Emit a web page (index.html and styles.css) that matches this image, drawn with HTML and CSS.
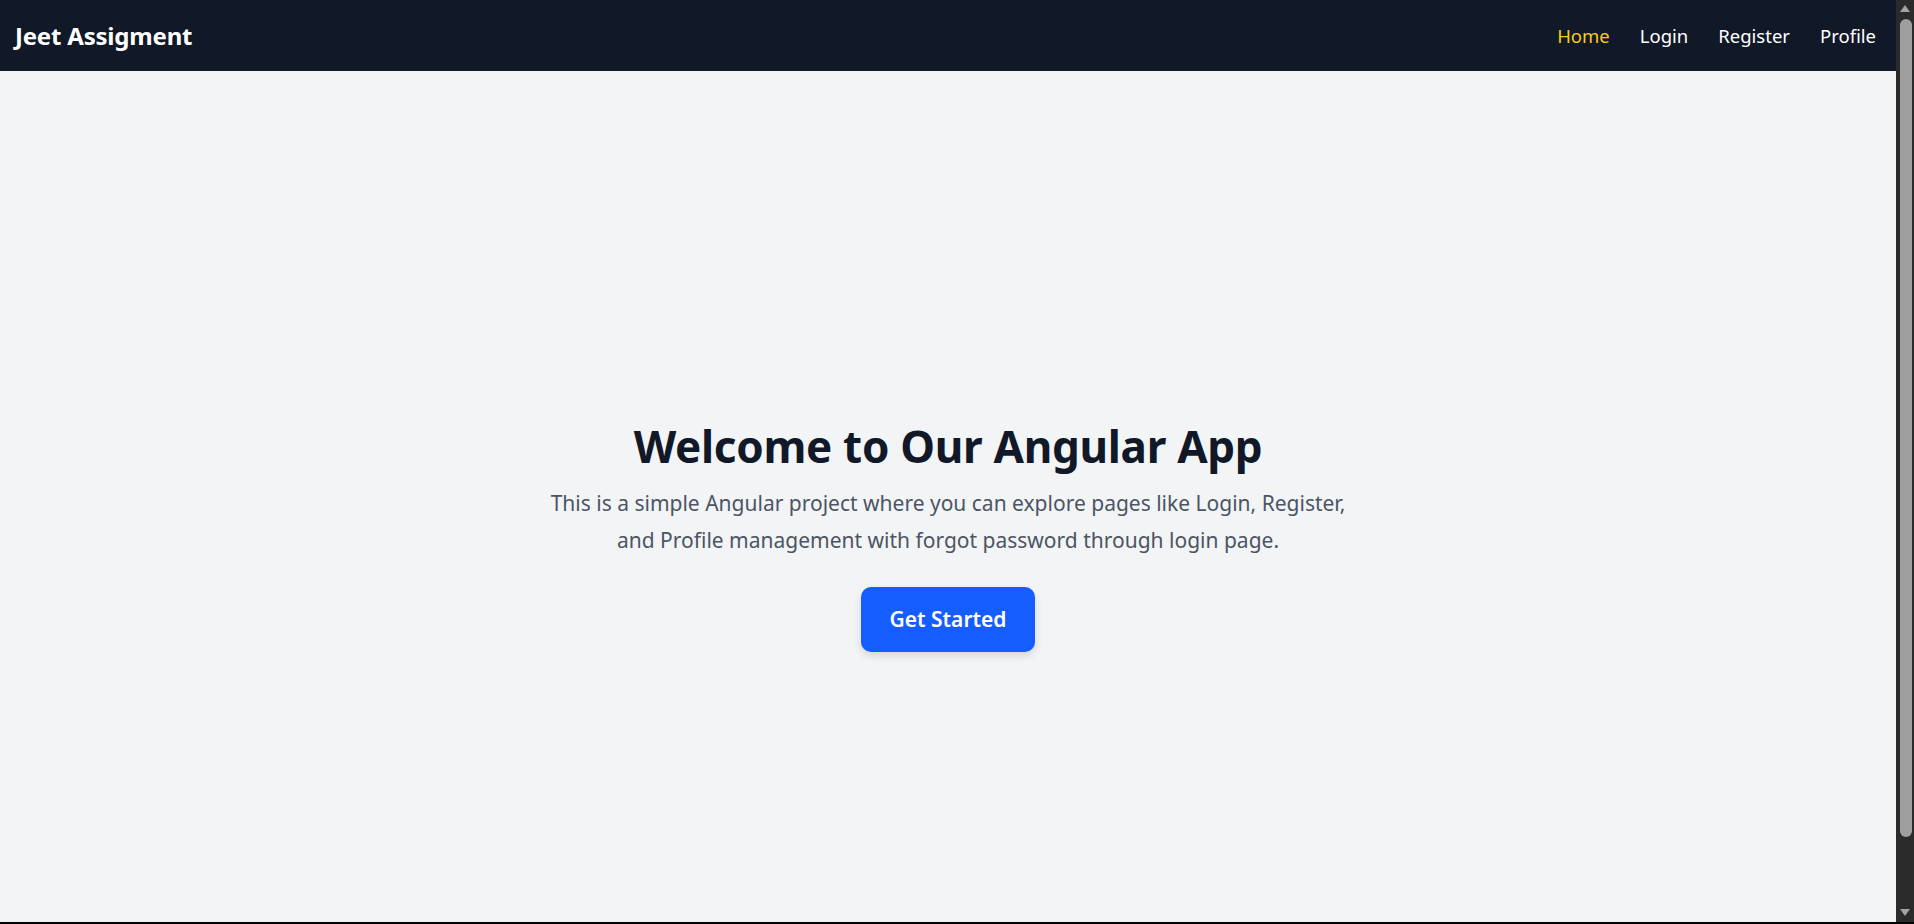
FILE: index.html
```html
<!DOCTYPE html>
<html lang="en">
<head>
<meta charset="utf-8">
<title>Jeet Assigment</title>
<link rel="stylesheet" href="styles.css">
</head>
<body>
<div class="window">
  <div class="page">
    <nav class="navbar">
      <a class="brand" href="#">Jeet Assigment</a>
      <ul class="nav-links">
        <li><a class="nav-link active" href="#">Home</a></li>
        <li><a class="nav-link" href="#">Login</a></li>
        <li><a class="nav-link" href="#">Register</a></li>
        <li><a class="nav-link" href="#">Profile</a></li>
      </ul>
    </nav>
    <main class="hero">
      <h1 class="hero-title">Welcome to Our Angular App</h1>
      <p class="hero-text">This is a simple Angular project where you can explore pages like Login, Register, and Profile management with forgot password through login page.</p>
      <a class="btn-primary" href="#">Get Started</a>
    </main>
  </div>
  <div class="scrollbar">
    <div class="scroll-arrow up"></div>
    <div class="scroll-track"><div class="scroll-thumb"></div></div>
    <div class="scroll-arrow down"></div>
  </div>
</div>
</body>
</html>
```

FILE: styles.css
```css
* { box-sizing: border-box; }
html, body { margin: 0; padding: 0; }
body {
  font-family: "Noto Sans", "Open Sans", sans-serif;
  background: #f3f4f6;
  overflow: hidden;
}
.window {
  display: flex;
  height: 924px;
  border-bottom: 2px solid #000;
  overflow: hidden;
}
.page {
  flex: 1;
  display: flex;
  flex-direction: column;
  min-width: 0;
  height: 922px;
  overflow: hidden;
}
.navbar {
  flex: 0 0 71px;
  background: #111827;
  display: flex;
  align-items: center;
  justify-content: space-between;
  padding: 0 20px 0 15px;
}
.brand {
  color: #fff;
  font-weight: 700;
  font-size: 24px;
  text-decoration: none;
  letter-spacing: -0.2px;
}
.nav-links {
  list-style: none;
  margin: 0;
  padding: 0;
  display: flex;
  gap: 30px;
}
.nav-link {
  color: #fff;
  text-decoration: none;
  font-size: 18.5px;
}
.nav-link.active { color: #facc15; }
.hero {
  flex: 0 0 924px;
  display: flex;
  flex-direction: column;
  align-items: center;
  justify-content: center;
  text-align: center;
  padding-top: 6px;
}
.hero-title {
  margin: 0 0 14px;
  font-size: 44px;
  line-height: 50px;
  font-weight: 700;
  color: #111827;
  letter-spacing: -0.3px;
}
.hero-text {
  margin: 0 0 28px;
  max-width: 810px;
  font-size: 21px;
  line-height: 37px;
  color: #4b5563;
}
.btn-primary {
  display: inline-block;
  background: #165dff;
  color: #fff;
  font-weight: 600;
  font-size: 21px;
  line-height: 35px;
  padding: 15px 29px;
  border-radius: 10px;
  text-decoration: none;
  box-shadow: 0 4px 8px rgba(0, 0, 0, 0.12);
}
.scrollbar {
  width: 18px;
  background: #2b2b2b;
  display: flex;
  flex-direction: column;
  align-items: center;
}
.scroll-arrow {
  width: 0;
  height: 0;
  border-left: 5px solid transparent;
  border-right: 5px solid transparent;
}
.scroll-arrow.up { border-bottom: 7px solid #a3a3a3; margin-top: 5px; }
.scroll-arrow.down { border-top: 7px solid #a3a3a3; margin-bottom: 6px; }
.scroll-track {
  flex: 1;
  width: 100%;
  padding: 7px 2px 0 4px;
}
.scroll-thumb {
  height: 818px;
  background: #9f9f9f;
  border-radius: 6px;
}
```
